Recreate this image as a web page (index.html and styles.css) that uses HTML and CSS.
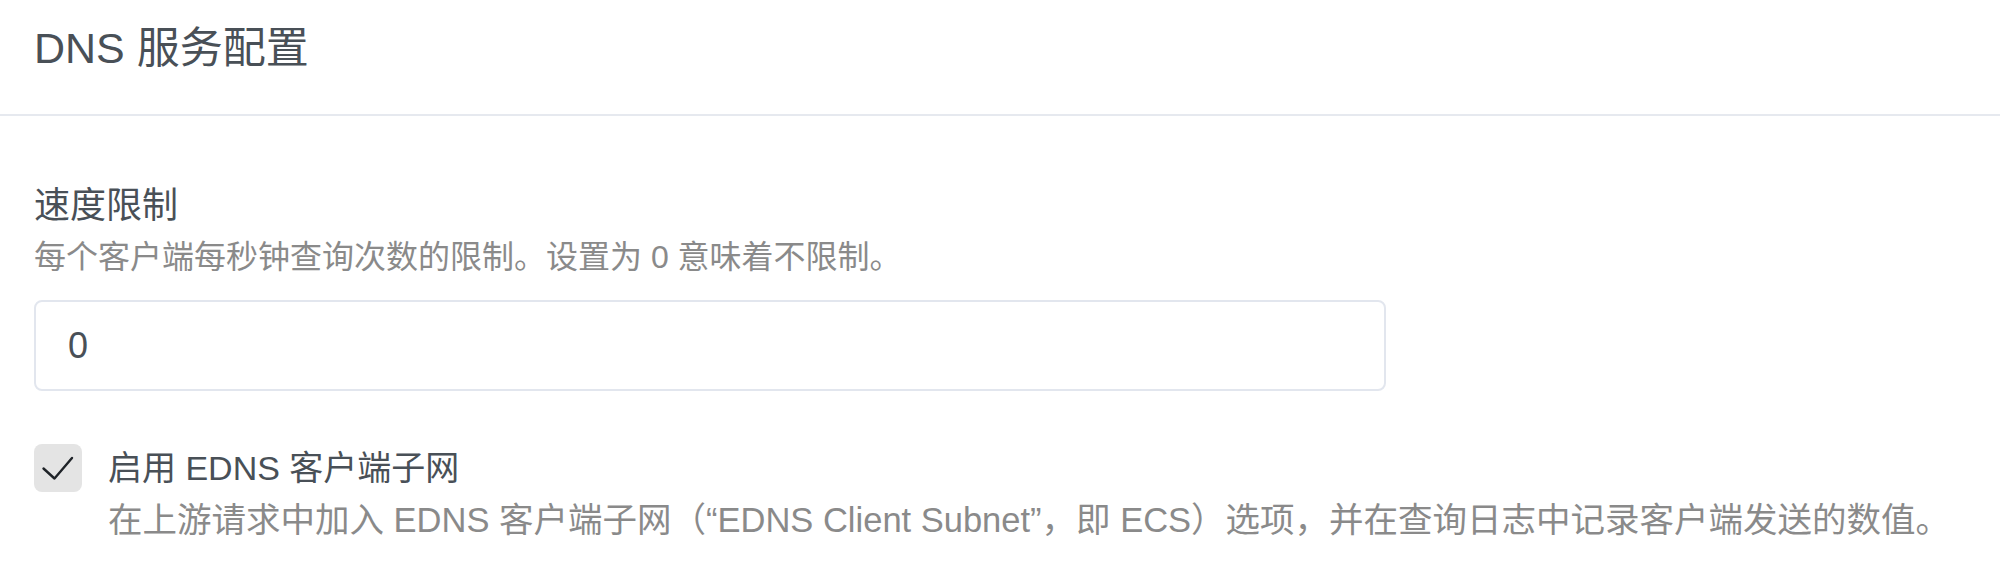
FILE: index.html
```html
<!DOCTYPE html>
<html lang="zh-CN">
<head>
<meta charset="utf-8">
<title>DNS 服务配置</title>
<link rel="stylesheet" href="styles.css">
</head>
<body>
<div class="card">
  <div class="card-header">
    <h3 class="card-title">DNS 服务配置</h3>
  </div>
  <div class="card-body">
    <div class="form-group">
      <label class="form-label" for="ratelimit">速度限制</label>
      <div class="form-desc">每个客户端每秒钟查询次数的限制。设置为 0 意味着不限制。</div>
      <input class="form-input" id="ratelimit" type="text" value="0">
    </div>
    <div class="check-row">
      <span class="check-box">
        <svg viewBox="0 0 48 48" width="48" height="48" aria-hidden="true">
          <path d="M9.5 24.5 L20.5 34.5 L38 14" fill="none" stroke="#1f2328" stroke-width="2.4" stroke-linecap="round" stroke-linejoin="round"/>
        </svg>
      </span>
      <div class="check-text">
        <div class="check-label">启用 EDNS 客户端子网</div>
        <div class="check-desc">在上游请求中加入 EDNS 客户端子网（“EDNS Client Subnet”，即 ECS）选项，并在查询日志中记录客户端发送的数值。</div>
      </div>
    </div>
  </div>
</div>
</body>
</html>
```

FILE: styles.css
```css
html, body {
  margin: 0;
  padding: 0;
  background: #ffffff;
}

body {
  font-family: "Liberation Sans", "Noto Sans CJK SC", sans-serif;
  color: #495057;
}

.card-header {
  height: 116px;
  padding: 23px 34px 0;
  box-sizing: border-box;
  border-bottom: 2px solid #e6e9ef;
}

.card-title {
  margin: 0;
  font-size: 43px;
  font-weight: 400;
  line-height: 50px;
  color: #495057;
}

.card-body {
  padding: 63px 34px 0;
}

.form-group {
  display: flex;
  flex-direction: column;
  align-items: flex-start;
}

.form-label {
  font-size: 36px;
  line-height: 54px;
  color: #495057;
}

.form-desc {
  margin-top: 2px;
  font-size: 32px;
  line-height: 44px;
  color: #8a8a8a;
}

.form-input {
  margin-top: 21px;
  width: 1352px;
  height: 91px;
  box-sizing: border-box;
  border: 2px solid #e2e6ee;
  border-radius: 8px;
  padding: 0 32px;
  font-family: inherit;
  font-size: 36px;
  color: #495057;
  background: #fff;
  outline: none;
}

.check-row {
  display: flex;
  align-items: flex-start;
  gap: 26px;
  margin-top: 53px;
}

.check-box {
  flex: none;
  width: 48px;
  height: 48px;
  border-radius: 8px;
  background: #e4e4e4;
  display: flex;
}

.check-label {
  font-size: 34px;
  line-height: 54px;
  margin-top: -3px;
  color: #495057;
}

.check-desc {
  margin-top: 2px;
  font-size: 34.5px;
  line-height: 46px;
  color: #8a8a8a;
}
```
